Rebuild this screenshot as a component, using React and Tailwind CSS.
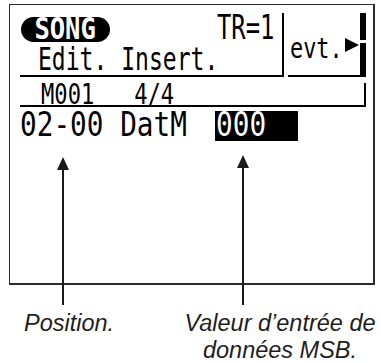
import React from 'react';

const lcd = "font-['DejaVu_Sans_Mono',monospace] leading-[0.75] whitespace-pre inline-block align-top";

function Arrows() {
  return (
    <svg className="absolute left-0 top-0 pointer-events-none" width="381" height="363">
      <line x1="63" y1="166" x2="63" y2="305" stroke="#1a1a1a" strokeWidth="2" />
      <polygon points="57,170 63,157 69,170" fill="#1a1a1a" />
      <line x1="243" y1="164" x2="243" y2="305" stroke="#1a1a1a" strokeWidth="2" />
      <polygon points="237,168 243,155 249,168" fill="#1a1a1a" />
    </svg>
  );
}

export default function App() {
  return (
    <div className="relative w-[381px] h-[363px] bg-white overflow-hidden">
      {/* lcd screen */}
      <div className="ml-[9px] mt-[4px] w-[366px] h-[281px] border-t border-l border-r-2 border-b-2 border-[#2b2b2b]">
        <div className="pl-[10px] pt-[8px] text-black">
          <div className="flex h-[64px]">
            <div className="w-[264px] h-[64px] border-r-2 border-b-2 border-black flex flex-col">
              <div className="flex h-[30px] items-start">
                <div className="ml-[1px] mt-[4px] w-[89px] h-[25px] rounded-full bg-black flex items-center justify-center shrink-0">
                  <span className={`${lcd} origin-center scale-x-[0.85] text-[30px] font-bold text-white`}>SONG</span>
                </div>
                <div className="ml-[107px] mt-[2px] w-[60px] shrink-0">
                  <span className={`${lcd} origin-left scale-x-[0.7] text-[34px]`}>TR=1</span>
                </div>
              </div>
              <div className="pl-[18px] mt-[4px]">
                <span className={`${lcd} origin-left scale-x-[0.72] text-[32px]`}>Edit. Insert.</span>
              </div>
            </div>
            <div className="ml-[4px] w-[78px] h-[64px] border-b-2 border-black flex items-start">
              <div className="ml-[2px] mt-[25px] w-[55px] shrink-0">
                <span className={`${lcd} origin-left scale-x-[0.78] text-[28px]`}>evt.</span>
              </div>
              <div className="mt-[25px] w-0 h-0 border-y-[7px] border-y-transparent border-l-[14px] border-l-black shrink-0" />
              <div className="ml-auto w-[6px] flex flex-col">
                <div className="h-[27px] bg-black" />
                <div className="mt-[3px] h-[32px] bg-black" />
              </div>
            </div>
          </div>

          <div className="flex w-[346px] h-[30px] border-b-2 border-black">
            <div className="pl-[21px] mt-[7px] w-[200px] shrink-0">
              <span className={`${lcd} origin-left scale-x-[0.79] text-[28px]`}>M001   4/4</span>
            </div>
            <div className="ml-auto mt-[6px] w-[2px] h-[22px] bg-black" />
          </div>

          <div className="flex items-start mt-[4px]">
            <div className="w-[195px] mt-[2px] shrink-0">
              <span className={`${lcd} origin-left scale-x-[0.84] text-[33px]`}>02-00 DatM</span>
            </div>
            <div className="w-[83px] h-[30px] bg-black pl-[1px] pt-[2px]">
              <span className={`${lcd} origin-left scale-x-[0.84] text-[33px] text-white`}>000</span>
            </div>
          </div>
        </div>
      </div>

      {/* captions */}
      <div className="flex mt-[25px] font-['Liberation_Sans',Arial,sans-serif] italic text-[23.5px] leading-[27px] text-[#1e1e1e]">
        <div className="pl-[24px] w-[180px] shrink-0 whitespace-nowrap">Position.</div>
        <div className="w-[200px] shrink-0 text-center whitespace-nowrap">
          Valeur d’entrée de
          <br />
          données MSB.
        </div>
      </div>

      <Arrows />
    </div>
  );
}
